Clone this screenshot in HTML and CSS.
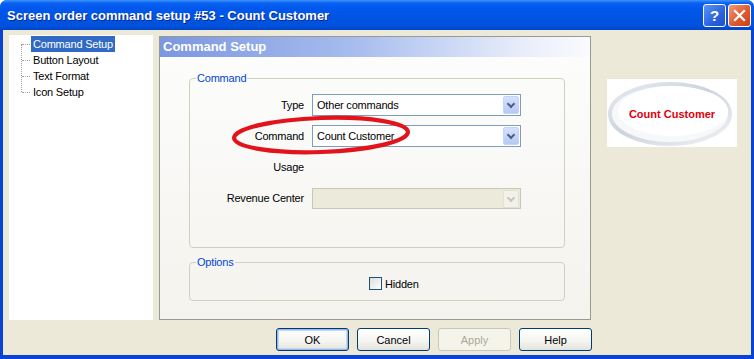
FILE: index.html
```html
<!DOCTYPE html>
<html lang="en">
<head>
    <meta charset="UTF-8">
    <title>Screen order command setup #53 - Count Customer</title>
    <link rel="stylesheet" href="styles.css">
</head>
<body>
    <div class="window">
        <!-- Title bar -->
        <div class="titlebar">
            <span class="title">Screen order command setup #53 - Count Customer</span>
            <div class="caption-btns">
                <span class="cap-btn help">?</span>
                <span class="cap-btn close">
                    <svg width="13" height="13" viewBox="0 0 13 13"><path d="M2 2 L11 11 M11 2 L2 11" stroke="#fff" stroke-width="2.2" stroke-linecap="square"/></svg>
                </span>
            </div>
        </div>

        <div class="client">
            <div class="content">
                <!-- Tree -->
                <div class="tree">
                    <div class="tree-lines"></div>
                    <div class="tree-item selected">Command Setup</div>
                    <div class="tree-item">Button Layout</div>
                    <div class="tree-item">Text Format</div>
                    <div class="tree-item">Icon Setup</div>
                </div>

                <!-- Main panel -->
                <div class="panel">
                    <div class="panel-header">Command Setup</div>
                    <div class="panel-body">
                        <fieldset class="group group-command">
                            <legend>Command</legend>
                            <div class="form-grid">
                                <label>Type</label>
                                <div class="combo"><span>Other commands</span><span class="arrow"></span></div>
                                <label>Command</label>
                                <div class="combo"><span>Count Customer</span><span class="arrow"></span></div>
                                <label>Usage</label>
                                <div></div>
                                <label>Revenue Center</label>
                                <div class="combo disabled"><span></span><span class="arrow"></span></div>
                            </div>
                        </fieldset>
                        <fieldset class="group group-options">
                            <legend>Options</legend>
                            <div class="check-row">
                                <span class="checkbox"></span>
                                <span>Hidden</span>
                            </div>
                        </fieldset>
                    </div>
                </div>

                <!-- Preview -->
                <div class="preview">
                    <svg width="130" height="68" viewBox="0 0 130 68">
                        <defs>
                            <linearGradient id="ring" x1="0" y1="0" x2="1" y2="1">
                                <stop offset="0" stop-color="#e8ebf1"/>
                                <stop offset="0.45" stop-color="#cdd3de"/>
                                <stop offset="1" stop-color="#f1f2f5"/>
                            </linearGradient>
                        </defs>
                        <ellipse cx="63" cy="35" rx="60" ry="30" fill="#f7f8fa" stroke="url(#ring)" stroke-width="4"/>
                        <ellipse cx="66" cy="32" rx="55" ry="25" fill="#fff"/>
                    </svg>
                    <span class="preview-text">Count Customer</span>
                </div>
            </div>

            <div class="buttons">
                <button class="btn default">OK</button>
                <button class="btn">Cancel</button>
                <button class="btn" disabled>Apply</button>
                <button class="btn">Help</button>
            </div>

            <!-- Red annotation ring -->
            <svg class="mark" width="184" height="42" viewBox="0 0 184 42">
                <ellipse cx="92" cy="21" rx="87" ry="17" fill="none" stroke="#e3131b" stroke-width="4.2" transform="rotate(-2 92 21)"/>
            </svg>
        </div>
    </div>
</body>
</html>
```

FILE: styles.css
```css
body {
    margin: 0;
    padding: 0;
    font-family: 'Liberation Sans', Arial, sans-serif;
    font-size: 11px;
    letter-spacing: -0.2px;
    color: #000;
    background: #fff;
}

.window {
    width: 754px;
    height: 359px;
    display: flex;
    flex-direction: column;
    background: #0842d6;
    border-radius: 7px 7px 0 0;
    overflow: hidden;
}

/* Title bar */
.titlebar {
    height: 30px;
    flex-shrink: 0;
    display: flex;
    align-items: center;
    justify-content: space-between;
    padding: 0 3px 0 7px;
    background: linear-gradient(180deg, #3d95ff 0, #0a61f0 3px, #0058ee 8px, #0055e5 50%, #0052dd 85%, #0046c8 100%);
}

.title {
    color: #fff;
    font-family: 'Liberation Sans', Arial, sans-serif;
    font-weight: bold;
    font-size: 13px;
    letter-spacing: 0;
    text-shadow: 1px 1px 0 #0a2a8c;
}

.caption-btns {
    display: flex;
    gap: 2px;
}

.cap-btn {
    width: 21px;
    height: 21px;
    border: 1px solid #fff;
    border-radius: 3px;
    display: flex;
    align-items: center;
    justify-content: center;
    color: #fff;
    font-weight: bold;
    font-size: 15px;
}

.cap-btn.help {
    background: linear-gradient(135deg, #5f93f4, #2a63de 60%, #1d4fc8);
}

.cap-btn.close {
    background: linear-gradient(135deg, #f09a7a, #e15a2e 55%, #c9401a);
}

/* Client area */
.client {
    flex: 1;
    margin: 0 3px 4px 3px;
    background: #ece9d8;
    position: relative;
}

.content {
    display: flex;
    align-items: flex-start;
    padding: 5px 0 0 6px;
}

/* Tree */
.tree {
    position: relative;
    width: 144px;
    height: 285px;
    background: #fff;
    padding-top: 1px;
    box-sizing: border-box;
}

.tree-item {
    margin-left: 22px;
    height: 16px;
    line-height: 16px;
    padding: 0 2px;
    display: inline-block;
    position: relative;
    clear: both;
    float: left;
}

.tree-item::before {
    content: '';
    position: absolute;
    left: -9px;
    top: 8px;
    width: 8px;
    border-top: 1px dotted #a0a0a0;
}

.tree-item.selected {
    background: #316ac5;
    color: #fff;
}

.tree-lines {
    position: absolute;
    left: 12px;
    top: 9px;
    height: 48px;
    border-left: 1px dotted #a0a0a0;
}

/* Main panel */
.panel {
    width: 432px;
    height: 284px;
    margin-left: 6px;
    margin-top: 1px;
    border: 1px solid #9a9a92;
    box-sizing: border-box;
    background: linear-gradient(180deg, #fdfdfd, #f4f3ee);
}

.panel-header {
    height: 20px;
    line-height: 20px;
    padding-left: 3px;
    background: linear-gradient(90deg, #7b97e0 0, #a7bcee 45%, #e9eefa 85%, #fafbfd 100%);
    color: #fff;
    font-weight: bold;
    font-size: 13px;
    letter-spacing: 0;
}

.panel-body {
    padding: 0 25px 0 29px;
}

.group {
    border: 1px solid #d0d0bf;
    border-radius: 4px;
    margin: 0;
    padding: 0;
}

.group legend {
    color: #0046d5;
    padding: 0 1px;
    margin-left: 6px;
    line-height: 13px;
}

.group-command {
    margin-top: 15px;
    height: 176px;
    box-sizing: border-box;
}

.form-grid {
    display: grid;
    grid-template-columns: 114px 209px;
    grid-auto-rows: 22px;
    column-gap: 8px;
    row-gap: 9px;
    padding-top: 9px;
}

.form-grid label {
    text-align: right;
    line-height: 22px;
}

.combo {
    display: flex;
    align-items: center;
    justify-content: space-between;
    border: 1px solid #7f9db9;
    background: #fff;
    padding: 0 1px 0 4px;
}

.combo .arrow {
    width: 16px;
    height: 18px;
    border-radius: 2px;
    background: linear-gradient(180deg, #d5e1fc, #b6c9f5);
    border: 1px solid #c3d3fd;
    box-sizing: border-box;
    position: relative;
}

.combo .arrow::after {
    content: '';
    position: absolute;
    left: 4px;
    top: 4px;
    width: 4px;
    height: 4px;
    border-right: 2px solid #4d6185;
    border-bottom: 2px solid #4d6185;
    transform: rotate(45deg);
}

.combo.disabled {
    background: #ebeadb;
    border-color: #c9c7ba;
    height: 21px;
    margin-top: 1px;
    box-sizing: border-box;
}

.combo.disabled .arrow {
    background: #f3f2ea;
    border-color: #e2e0d4;
}

.combo.disabled .arrow::after {
    border-color: #c9c7ba;
}

.group-options {
    margin-top: 8px;
    height: 45px;
    box-sizing: border-box;
}

.check-row {
    display: flex;
    align-items: center;
    gap: 3px;
    padding-top: 8px;
    padding-left: 179px;
}

.checkbox {
    width: 13px;
    height: 13px;
    border: 1px solid #1c5180;
    box-sizing: border-box;
    background: linear-gradient(135deg, #dcdcd7, #fff);
}

/* Preview */
.preview {
    position: relative;
    width: 130px;
    height: 68px;
    margin-left: 16px;
    margin-top: 44px;
    background: #fff;
    display: flex;
    align-items: center;
    justify-content: center;
}

.preview svg {
    position: absolute;
    left: 0;
    top: 0;
}

.preview-text {
    position: relative;
    color: #e0000b;
    font-weight: bold;
    font-size: 11px;
    letter-spacing: 0;
    margin-top: 1px;
}

/* Dialog buttons */
.buttons {
    display: flex;
    gap: 8px;
    padding-left: 273px;
    margin-top: 8px;
}

.btn {
    width: 73px;
    height: 23px;
    font-family: 'Liberation Sans', Arial, sans-serif;
    font-size: 11px;
    color: #000;
    border: 1px solid #003c74;
    border-radius: 3px;
    background: linear-gradient(180deg, #ffffff 0, #f4f4f0 60%, #e3e2da 100%);
    padding: 0;
}

.btn.default {
    box-shadow: inset 0 0 0 1px #9cb6e8, inset 0 0 0 2px #c6d6f5;
}

.btn:disabled {
    color: #aca899;
    border-color: #c9c7ba;
    background: #f5f4ea;
}

/* Annotation */
.mark {
    position: absolute;
    left: 226px;
    top: 84px;
}
```
